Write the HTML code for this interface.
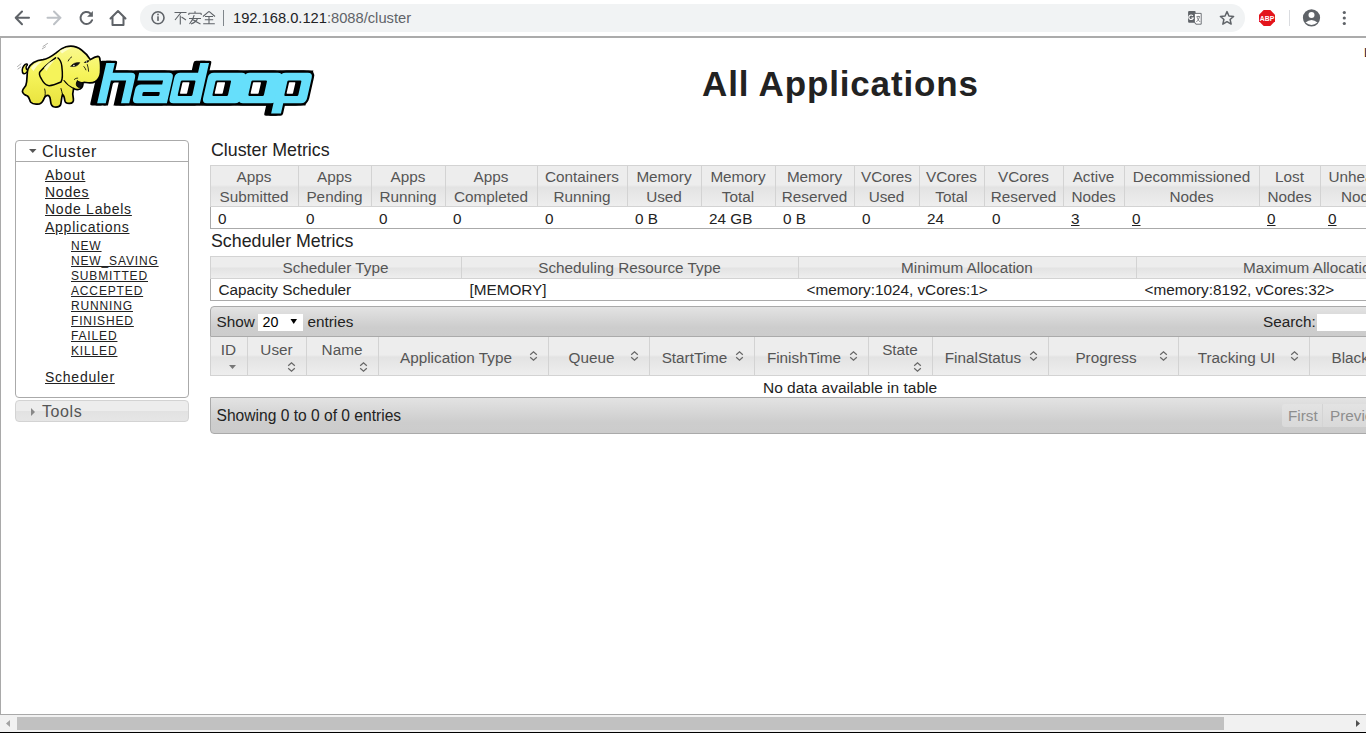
<!DOCTYPE html>
<html><head><meta charset="utf-8"><title>All Applications</title>
<style>
html,body{margin:0;padding:0;}
body{width:1366px;height:733px;overflow:hidden;position:relative;background:#fff;font-family:"Liberation Sans", sans-serif;}
.t{position:absolute;white-space:nowrap;}
.r{position:absolute;}
u{text-decoration:underline;}
</style></head><body>
<div class="r" style="left:0px;top:0px;width:1366px;height:36px;background:#fff;"></div>
<div class="r" style="left:0px;top:36px;width:1366px;height:2px;background:#ababab;"></div>
<div class="r" style="left:140px;top:4px;width:1105px;height:28px;background:#f1f3f4;border-radius:14px;"></div>
<svg class="r" style="left:0;top:0" width="1366" height="36" viewBox="0 0 1366 36">
<g fill="none" stroke="#5f6368" stroke-width="2" stroke-linecap="round" stroke-linejoin="round">
<path d="M29,17.8 H16 M22,11.5 L15.7,17.8 L22,24.2"/>
<path d="M110.5,18.5 L118,11 L125.5,18.5 M112.5,17 V25 H123.5 V17"/>
<path d="M92.1,20.2 A6,6 0 1 1 90.2,13.2"/>
</g>
<path d="M47.5,17.8 H60.5 M54,11.5 L60.3,17.8 L54,24.2" fill="none" stroke="#bdc1c6" stroke-width="2" stroke-linecap="round" stroke-linejoin="round"/>
<path d="M87.1,16.7 L92.9,11.1 L92.9,16.7 Z" fill="#5f6368"/>
<!-- info icon -->
<circle cx="158" cy="17.8" r="6" fill="none" stroke="#5f6368" stroke-width="1.6"/>
<rect x="157.2" y="16.3" width="1.6" height="4.6" fill="#5f6368"/>
<rect x="157.2" y="13.7" width="1.6" height="1.6" fill="#5f6368"/>
<!-- 不安全 drawn -->
<g fill="none" stroke="#5f6368" stroke-width="1.1">
<path d="M174.5,12.5 H186.5 M181,12.5 L175,20 M180.3,15.5 V24.5 M181.5,17 L186,20"/>
<path d="M195,11.3 V12.8 M188.8,13.3 H201.2 M188.8,13.3 V15 M201.2,13.3 V15 M189,18.5 H201 M194.2,15.2 Q193,20 189.5,24 M192,19 Q196,22 200.5,24 M197.5,18.5 Q196.5,22 191,24"/>
<path d="M209,11.3 L203,16.5 M209,11.3 L215,16.5 M205,16.5 H213 M204.8,19.7 H213.2 M209,16.5 V23.8 M203.2,23.8 H214.8"/>
</g>
<rect x="223" y="10" width="1" height="16" fill="#80868b"/>
<!-- translate icon -->
<rect x="1188.1" y="11" width="7.5" height="11.7" rx="1" fill="#5f6368"/>
<path d="M1194.4,13.4 H1201.2 V24.2 H1196 L1194.4,22.7 Z" fill="#fff" stroke="#5f6368" stroke-width="0.9"/>
<path d="M1195.4,22.4 L1196.5,24.5 L1194.5,22.6 Z" fill="#5f6368"/>
<path d="M1192.9,15.8 A2.3,2.3 0 1 0 1193.3,18 H1191.3" fill="none" stroke="#fff" stroke-width="1.1"/>
<path d="M1196.5,16.5 H1200 M1198.2,15.8 V16.5 M1197,17 Q1198,20.5 1200.2,22 M1199.5,17 Q1198.5,20.5 1196.3,22" fill="none" stroke="#5f6368" stroke-width="0.7"/>
<!-- star -->
<path d="M1227,11.6 L1228.95,15.95 L1233.6,16.4 L1230.1,19.5 L1231.15,24.1 L1227,21.7 L1222.85,24.1 L1223.9,19.5 L1220.4,16.4 L1225.05,15.95 Z" fill="none" stroke="#5f6368" stroke-width="1.5" stroke-linejoin="round"/>
<!-- ABP -->
<path d="M1263.7,10 H1270.3 L1275,14.7 V21.3 L1270.3,26 H1263.7 L1259,21.3 V14.7 Z" fill="#e3141b"/>
<text x="1267" y="20.8" font-size="6.8" font-family="Liberation Sans" fill="#fff" font-weight="bold" text-anchor="middle">ABP</text>
<rect x="1289" y="10" width="1" height="16" fill="#dadce0"/>
<!-- profile -->
<circle cx="1311.5" cy="17.8" r="8.6" fill="#5f6368"/>
<circle cx="1311.5" cy="15" r="3" fill="#fff"/>
<path d="M1305.5,22.6 Q1311.5,17.6 1317.5,22.6 Q1311.5,27.5 1305.5,22.6 Z" fill="#fff"/>
<circle cx="1344.3" cy="12.5" r="1.6" fill="#5f6368"/>
<circle cx="1344.3" cy="18" r="1.6" fill="#5f6368"/>
<circle cx="1344.3" cy="23.5" r="1.6" fill="#5f6368"/>
</svg>
<div class="t" style="left:233px;top:10.86px;font-size:14.7px;line-height:14.7px;color:#202124;">192.168.0.121<span style="color:#5f6368">:8088/cluster</span></div>
<div class="r" style="left:0px;top:38px;width:1px;height:676px;background:#a9a9a9;"></div>
<div class="r" style="left:0px;top:714px;width:1366px;height:1px;background:#a9a9a9;"></div>
<div class="r" style="left:0px;top:715px;width:1366px;height:17px;background:#f1f1f1;"></div>
<div class="r" style="left:17px;top:717px;width:1207px;height:13px;background:#c1c1c1;"></div>
<div class="r" style="left:0px;top:732px;width:1366px;height:1px;background:#000;"></div>
<svg class="r" style="left:0;top:715px" width="1366" height="17"><path d="M10,5 V12 L6,8.5 Z" fill="#a3a3a3"/><path d="M1356,5 V12 L1360,8.5 Z" fill="#505050"/></svg>
<svg class="r" style="left:0;top:38px" width="340" height="90" viewBox="0 38 340 90">
<g transform="matrix(1,0,-0.226,1,23.28,0)">
<path d="M97.2,63 H105.8 V72.7 H124.3 Q129.3,72.7 129.3,77.7 V103.3 H121.1 V80.5 H105.8 V103.3 H97.2 Z" fill="#000" stroke="#000" stroke-width="4.4" stroke-linejoin="round"/>
<path d="M97.2,63 H105.8 V72.7 H124.3 Q129.3,72.7 129.3,77.7 V103.3 H121.1 V80.5 H105.8 V103.3 H97.2 Z" transform="translate(-4.6,0)" fill="#000" stroke="#000" stroke-width="4.4" stroke-linejoin="round"/>
<path d="M132.3,72.7 H162 Q167,72.7 167,77.7 V103.3 H137 Q132,103.3 132,98.3 V89.6 Q132,84.6 137,84.6 H158 V80.5 H132.3 Z" fill="#000" stroke="#000" stroke-width="4.4" stroke-linejoin="round"/>
<path d="M132.3,72.7 H162 Q167,72.7 167,77.7 V103.3 H137 Q132,103.3 132,98.3 V89.6 Q132,84.6 137,84.6 H158 V80.5 H132.3 Z" transform="translate(-4.6,0)" fill="#000" stroke="#000" stroke-width="4.4" stroke-linejoin="round"/>
<path d="M173.5,72.7 H191.2 V63 H200 V103.3 H173.5 Q168.5,103.3 168.5,98.3 V77.7 Q168.5,72.7 173.5,72.7 Z" fill="#000" stroke="#000" stroke-width="4.4" stroke-linejoin="round"/>
<path d="M173.5,72.7 H191.2 V63 H200 V103.3 H173.5 Q168.5,103.3 168.5,98.3 V77.7 Q168.5,72.7 173.5,72.7 Z" transform="translate(-4.6,0)" fill="#000" stroke="#000" stroke-width="4.4" stroke-linejoin="round"/>
<path d="M207,72.7 H235 Q240,72.7 240,77.7 V98.3 Q240,103.3 235,103.3 H207 Q202,103.3 202,98.3 V77.7 Q202,72.7 207,72.7 Z" fill="#000" stroke="#000" stroke-width="4.4" stroke-linejoin="round"/>
<path d="M207,72.7 H235 Q240,72.7 240,77.7 V98.3 Q240,103.3 235,103.3 H207 Q202,103.3 202,98.3 V77.7 Q202,72.7 207,72.7 Z" transform="translate(-4.6,0)" fill="#000" stroke="#000" stroke-width="4.4" stroke-linejoin="round"/>
<path d="M243,72.7 H271 Q276,72.7 276,77.7 V98.3 Q276,103.3 271,103.3 H243 Q238,103.3 238,98.3 V77.7 Q238,72.7 243,72.7 Z" fill="#000" stroke="#000" stroke-width="4.4" stroke-linejoin="round"/>
<path d="M243,72.7 H271 Q276,72.7 276,77.7 V98.3 Q276,103.3 271,103.3 H243 Q238,103.3 238,98.3 V77.7 Q238,72.7 243,72.7 Z" transform="translate(-4.6,0)" fill="#000" stroke="#000" stroke-width="4.4" stroke-linejoin="round"/>
<path d="M279,72.7 H301 Q306,72.7 306,77.7 V98.3 Q306,103.3 301,103.3 H283.3 V113.5 H273.5 V77.7 Q273.5,72.7 279,72.7 Z" fill="#000" stroke="#000" stroke-width="4.4" stroke-linejoin="round"/>
<path d="M279,72.7 H301 Q306,72.7 306,77.7 V98.3 Q306,103.3 301,103.3 H283.3 V113.5 H273.5 V77.7 Q273.5,72.7 279,72.7 Z" transform="translate(-4.6,0)" fill="#000" stroke="#000" stroke-width="4.4" stroke-linejoin="round"/>
<path d="M104,70.5 H306 V105.5 H104 Z" fill="#000"/>
<path d="M97.2,63 H105.8 V72.7 H124.3 Q129.3,72.7 129.3,77.7 V103.3 H121.1 V80.5 H105.8 V103.3 H97.2 Z" fill="#66dffb"/>
<path d="M132.3,72.7 H162 Q167,72.7 167,77.7 V103.3 H137 Q132,103.3 132,98.3 V89.6 Q132,84.6 137,84.6 H158 V80.5 H132.3 Z" fill="#66dffb"/>
<path d="M173.5,72.7 H191.2 V63 H200 V103.3 H173.5 Q168.5,103.3 168.5,98.3 V77.7 Q168.5,72.7 173.5,72.7 Z" fill="#66dffb"/>
<path d="M207,72.7 H235 Q240,72.7 240,77.7 V98.3 Q240,103.3 235,103.3 H207 Q202,103.3 202,98.3 V77.7 Q202,72.7 207,72.7 Z" fill="#66dffb"/>
<path d="M243,72.7 H271 Q276,72.7 276,77.7 V98.3 Q276,103.3 271,103.3 H243 Q238,103.3 238,98.3 V77.7 Q238,72.7 243,72.7 Z" fill="#66dffb"/>
<path d="M279,72.7 H301 Q306,72.7 306,77.7 V98.3 Q306,103.3 301,103.3 H283.3 V113.5 H273.5 V77.7 Q273.5,72.7 279,72.7 Z" fill="#66dffb"/>
<rect x="140.4" y="92.1" width="17.1" height="3.8" rx="1" fill="#000"/>
<rect x="175.90" y="80.4" width="14.70" height="15.5" rx="1.2" fill="#000"/>
<rect x="177.8" y="82.3" width="7.10" height="11.4" rx="0.6" fill="#fff"/>
<rect x="210.60" y="80.4" width="15.60" height="15.5" rx="1.2" fill="#000"/>
<rect x="212.5" y="82.3" width="8.00" height="11.4" rx="0.6" fill="#fff"/>
<rect x="246.50" y="80.4" width="15.60" height="15.5" rx="1.2" fill="#000"/>
<rect x="248.4" y="82.3" width="8.00" height="11.4" rx="0.6" fill="#fff"/>
<rect x="282.50" y="80.4" width="14.00" height="15.5" rx="1.2" fill="#000"/>
<rect x="284.4" y="82.3" width="6.40" height="11.4" rx="0.6" fill="#fff"/>
<path d="M108.5,84 Q108.5,82.5 110,82.5 H114.1 V106.5 H108.5 Z" fill="#fff"/>
</g>
<defs><linearGradient id="ey" x1="0" y1="0" x2="0" y2="1"><stop offset="0" stop-color="#f9f890"/><stop offset="0.45" stop-color="#f6f45c"/><stop offset="1" stop-color="#e8e23c"/></linearGradient></defs>
<g stroke="#000" stroke-linejoin="round" stroke-linecap="round">
<path d="M28.5,70 C27,73 24,75 22.5,72.5 C21.5,70 23,66 25.2,64.3 C26.5,63.5 27.8,64 27.2,65.3 C25.8,66.5 25.5,69 27.5,70 Z" fill="#f5f35a" stroke-width="1.5"/>
<path d="M28,69 C30,64 36,60 43,59.6 C48,59 52,56 55.8,53.1 C58.5,50.5 62,48 66,46.8 C71,45.5 77,46.5 81.5,50 C85,52.5 88,56 90.3,59.6 C92,58.5 95,56.7 97.7,56.4 C99,56.5 99.8,57.2 99.7,58.5 C100.6,62 100.8,68 100.5,72.6 C100.2,76.5 98.5,79.5 95.5,81.5 C93,83 89.5,83.2 86,82.5 C84.5,82.4 83.5,82.3 82.8,82.8 C83,84.5 82.5,87.5 80,89 C77.5,90 75,89.5 73.6,88.4 C72.8,91 72.5,95 73.4,99 C73.8,101.5 72.5,103.3 69.5,103.4 C66.5,103.5 65,102.8 64.8,100.5 C64.5,98 64,95.5 62.5,94.5 C61.5,97 61.5,101 60.8,104 C60.2,106.5 57.5,107.3 54.5,107 C51.5,106.6 50.8,104 50.6,101.5 C50.4,99 50,96.5 48.5,95.5 C46.5,95 45.5,96 44.5,97.5 C43.5,100 42.5,103.2 39.5,103.8 C36,104.4 32.5,104.2 30.8,102.3 C29.5,100.5 29.5,97.5 27.5,96 C25,95 22.5,94 22.4,91.2 C22.5,89 24.5,87.5 25.8,85.6 C27,82 27,78 27.1,75.4 C27.3,72.5 27.5,70.5 28,69 Z" fill="url(#ey)" stroke-width="1.7"/>
<path d="M55.5,57.8 C50,62 44,67 40,71.7 C38.8,73.5 39.5,76 41.5,79 C43,82 45.5,85 48.4,85.6 C52,86 57,83.8 61,82 C62.5,80 62.5,72 61.8,66 C61.3,62 60,59.5 58,58" fill="#f5f35a" stroke-width="1.5"/>
<path d="M77.3,81 C79,81.8 81,82.5 82.8,82.8 C83,84.5 82.5,86.5 81,87.3 C79.5,88 77.5,87.5 76.5,85.5 C76,84 76.5,82 77.3,81 Z" fill="#111" stroke-width="0.9"/>
<path d="M64,80.5 C66.5,84 70,86.8 73.6,88.4" fill="none" stroke-width="1.1"/>
<path d="M70.9,66.2 C72.5,63.5 76,62.2 79.8,62.6 C78.5,65.5 75,67.5 70.9,66.2 Z" fill="#111" stroke-width="0.5"/>
<path d="M68.2,61 C69,59.2 70.2,57.8 71.6,57 M83.9,66.5 C84.8,67.5 85.5,68.7 85.9,69.9 M87.3,64.5 C88,66.8 88.5,69 88.6,71.3 M74.3,79.5 C75.3,78.5 76.5,78 77.7,78.1" fill="none" stroke-width="0.8"/>
<path d="M84.6,62.4 C86,61 88,60.4 89.3,60.6 C88.6,62.2 86.5,63.2 84.6,62.4 Z" fill="#111" stroke-width="0.5"/>

<path d="M44.7,89 C45.5,92 45.5,95 44.5,97.5 M61,88.5 C61.7,90.8 62,92.8 62.5,94.5" fill="none" stroke-width="0.9"/>
<path d="M43,46.5 L47.5,43.5 M42.3,48.8 L45.5,46.8" fill="none" stroke="#888" stroke-width="0.7"/>
<path d="M17.5,66.5 L21,63.8 M18,69 L20.8,67" fill="none" stroke="#888" stroke-width="0.7"/>
</g>
<path d="M31,68 C33.5,64 38,61.5 42,61.5 C38.5,64 35.5,67 33.5,71 Z" fill="#fdfdc8"/>
<path d="M60,51 C63,48.5 68,47.3 72,47.8 C68,49.5 64.5,51.5 62,53.5 Z" fill="#fdfdc8"/>
<path d="M44,68 C47,64 51,61 55,59.5 C52,63 49,66.5 46.5,71 Z" fill="#fbfbb0"/>
<circle cx="73.9" cy="65.5" r="0.8" fill="#fff"/><circle cx="86.6" cy="61.9" r="0.55" fill="#fff"/>

</svg>
<div class="t" style="left:702px;top:66.37px;font-size:35px;line-height:35px;color:#222;font-weight:bold;letter-spacing:0.85px;">All Applications</div>
<div class="t" style="left:1364px;top:46.84px;font-size:12px;line-height:12px;color:#222;">Logged in as: dr.who</div>
<div class="r" style="left:15px;top:140px;width:172px;height:256px;border:1px solid #aaa;border-radius:4px;background:#fff;"></div>
<div class="r" style="left:16px;top:161px;width:172px;height:1px;background:#aaa;"></div>
<svg class="r" style="left:28px;top:148px" width="10" height="6"><path d="M1,1 H8.5 L4.75,5 Z" fill="#555"/></svg>
<div class="t" style="left:42px;top:143.96px;font-size:16px;line-height:16px;color:#222;letter-spacing:0.6px;">Cluster</div>
<div class="t" style="left:45px;top:168.15px;font-size:14px;line-height:14px;color:#222;letter-spacing:0.75px;text-decoration:underline;">About</div>
<div class="t" style="left:45px;top:185.15px;font-size:14px;line-height:14px;color:#222;letter-spacing:0.75px;text-decoration:underline;">Nodes</div>
<div class="t" style="left:45px;top:201.65px;font-size:14px;line-height:14px;color:#222;letter-spacing:0.75px;text-decoration:underline;">Node Labels</div>
<div class="t" style="left:45px;top:219.55px;font-size:14px;line-height:14px;color:#222;letter-spacing:0.75px;text-decoration:underline;">Applications</div>
<div class="t" style="left:71px;top:239.64px;font-size:12px;line-height:12px;color:#222;letter-spacing:0.85px;text-decoration:underline;">NEW</div>
<div class="t" style="left:71px;top:254.64px;font-size:12px;line-height:12px;color:#222;letter-spacing:0.85px;text-decoration:underline;">NEW_SAVING</div>
<div class="t" style="left:71px;top:269.64px;font-size:12px;line-height:12px;color:#222;letter-spacing:0.85px;text-decoration:underline;">SUBMITTED</div>
<div class="t" style="left:71px;top:284.64px;font-size:12px;line-height:12px;color:#222;letter-spacing:0.85px;text-decoration:underline;">ACCEPTED</div>
<div class="t" style="left:71px;top:299.64px;font-size:12px;line-height:12px;color:#222;letter-spacing:0.85px;text-decoration:underline;">RUNNING</div>
<div class="t" style="left:71px;top:314.64px;font-size:12px;line-height:12px;color:#222;letter-spacing:0.85px;text-decoration:underline;">FINISHED</div>
<div class="t" style="left:71px;top:329.64px;font-size:12px;line-height:12px;color:#222;letter-spacing:0.85px;text-decoration:underline;">FAILED</div>
<div class="t" style="left:71px;top:344.64px;font-size:12px;line-height:12px;color:#222;letter-spacing:0.85px;text-decoration:underline;">KILLED</div>
<div class="t" style="left:45px;top:369.65px;font-size:14px;line-height:14px;color:#222;letter-spacing:0.75px;text-decoration:underline;">Scheduler</div>
<div class="r" style="left:15px;top:400px;width:172px;height:20px;border:1px solid #d3d3d3;border-radius:4px;background:linear-gradient(#ededed 0%,#ededed 50%,#e2e2e2 51%,#e6e6e6 100%);"></div>
<svg class="r" style="left:30px;top:407px" width="6" height="10"><path d="M1,1 V9 L5,5 Z" fill="#888"/></svg>
<div class="t" style="left:42px;top:404.06px;font-size:16px;line-height:16px;color:#555;letter-spacing:0.6px;">Tools</div>
<div class="t" style="left:211px;top:142.23px;font-size:17.8px;line-height:17.8px;color:#222;">Cluster Metrics</div>
<div class="r" style="left:210px;top:165px;width:1200px;height:42px;border-top:1px solid #d3d3d3;border-bottom:1px solid #d3d3d3;border-left:1px solid #d3d3d3;box-sizing:border-box;background:linear-gradient(#ededed 0%,#ededed 47%,#e3e3e3 53%,#eeeeee 100%);"></div>
<div class="r" style="left:210px;top:207px;width:1200px;height:22px;border-left:1px solid #aaa;border-bottom:1px solid #aaa;box-sizing:border-box;background:#fff;"></div>
<div class="t" style="left:210px;top:169.35px;font-size:15.3px;line-height:15.3px;color:#555;width:88px;text-align:center;">Apps</div>
<div class="t" style="left:210px;top:188.55px;font-size:15.3px;line-height:15.3px;color:#555;width:88px;text-align:center;">Submitted</div>
<div class="t" style="left:218px;top:211.05px;font-size:15.3px;line-height:15.3px;color:#222;">0</div>
<div class="r" style="left:298px;top:166px;width:1px;height:41px;background:#d3d3d3;"></div>
<div class="t" style="left:298px;top:169.35px;font-size:15.3px;line-height:15.3px;color:#555;width:73px;text-align:center;">Apps</div>
<div class="t" style="left:298px;top:188.55px;font-size:15.3px;line-height:15.3px;color:#555;width:73px;text-align:center;">Pending</div>
<div class="t" style="left:306px;top:211.05px;font-size:15.3px;line-height:15.3px;color:#222;">0</div>
<div class="r" style="left:371px;top:166px;width:1px;height:41px;background:#d3d3d3;"></div>
<div class="t" style="left:371px;top:169.35px;font-size:15.3px;line-height:15.3px;color:#555;width:74px;text-align:center;">Apps</div>
<div class="t" style="left:371px;top:188.55px;font-size:15.3px;line-height:15.3px;color:#555;width:74px;text-align:center;">Running</div>
<div class="t" style="left:379px;top:211.05px;font-size:15.3px;line-height:15.3px;color:#222;">0</div>
<div class="r" style="left:445px;top:166px;width:1px;height:41px;background:#d3d3d3;"></div>
<div class="t" style="left:445px;top:169.35px;font-size:15.3px;line-height:15.3px;color:#555;width:92px;text-align:center;">Apps</div>
<div class="t" style="left:445px;top:188.55px;font-size:15.3px;line-height:15.3px;color:#555;width:92px;text-align:center;">Completed</div>
<div class="t" style="left:453px;top:211.05px;font-size:15.3px;line-height:15.3px;color:#222;">0</div>
<div class="r" style="left:537px;top:166px;width:1px;height:41px;background:#d3d3d3;"></div>
<div class="t" style="left:537px;top:169.35px;font-size:15.3px;line-height:15.3px;color:#555;width:90px;text-align:center;">Containers</div>
<div class="t" style="left:537px;top:188.55px;font-size:15.3px;line-height:15.3px;color:#555;width:90px;text-align:center;">Running</div>
<div class="t" style="left:545px;top:211.05px;font-size:15.3px;line-height:15.3px;color:#222;">0</div>
<div class="r" style="left:627px;top:166px;width:1px;height:41px;background:#d3d3d3;"></div>
<div class="t" style="left:627px;top:169.35px;font-size:15.3px;line-height:15.3px;color:#555;width:74px;text-align:center;">Memory</div>
<div class="t" style="left:627px;top:188.55px;font-size:15.3px;line-height:15.3px;color:#555;width:74px;text-align:center;">Used</div>
<div class="t" style="left:635px;top:211.05px;font-size:15.3px;line-height:15.3px;color:#222;">0 B</div>
<div class="r" style="left:701px;top:166px;width:1px;height:41px;background:#d3d3d3;"></div>
<div class="t" style="left:701px;top:169.35px;font-size:15.3px;line-height:15.3px;color:#555;width:74px;text-align:center;">Memory</div>
<div class="t" style="left:701px;top:188.55px;font-size:15.3px;line-height:15.3px;color:#555;width:74px;text-align:center;">Total</div>
<div class="t" style="left:709px;top:211.05px;font-size:15.3px;line-height:15.3px;color:#222;">24 GB</div>
<div class="r" style="left:775px;top:166px;width:1px;height:41px;background:#d3d3d3;"></div>
<div class="t" style="left:775px;top:169.35px;font-size:15.3px;line-height:15.3px;color:#555;width:79px;text-align:center;">Memory</div>
<div class="t" style="left:775px;top:188.55px;font-size:15.3px;line-height:15.3px;color:#555;width:79px;text-align:center;">Reserved</div>
<div class="t" style="left:783px;top:211.05px;font-size:15.3px;line-height:15.3px;color:#222;">0 B</div>
<div class="r" style="left:854px;top:166px;width:1px;height:41px;background:#d3d3d3;"></div>
<div class="t" style="left:854px;top:169.35px;font-size:15.3px;line-height:15.3px;color:#555;width:65px;text-align:center;">VCores</div>
<div class="t" style="left:854px;top:188.55px;font-size:15.3px;line-height:15.3px;color:#555;width:65px;text-align:center;">Used</div>
<div class="t" style="left:862px;top:211.05px;font-size:15.3px;line-height:15.3px;color:#222;">0</div>
<div class="r" style="left:919px;top:166px;width:1px;height:41px;background:#d3d3d3;"></div>
<div class="t" style="left:919px;top:169.35px;font-size:15.3px;line-height:15.3px;color:#555;width:65px;text-align:center;">VCores</div>
<div class="t" style="left:919px;top:188.55px;font-size:15.3px;line-height:15.3px;color:#555;width:65px;text-align:center;">Total</div>
<div class="t" style="left:927px;top:211.05px;font-size:15.3px;line-height:15.3px;color:#222;">24</div>
<div class="r" style="left:984px;top:166px;width:1px;height:41px;background:#d3d3d3;"></div>
<div class="t" style="left:984px;top:169.35px;font-size:15.3px;line-height:15.3px;color:#555;width:79px;text-align:center;">VCores</div>
<div class="t" style="left:984px;top:188.55px;font-size:15.3px;line-height:15.3px;color:#555;width:79px;text-align:center;">Reserved</div>
<div class="t" style="left:992px;top:211.05px;font-size:15.3px;line-height:15.3px;color:#222;">0</div>
<div class="r" style="left:1063px;top:166px;width:1px;height:41px;background:#d3d3d3;"></div>
<div class="t" style="left:1063px;top:169.35px;font-size:15.3px;line-height:15.3px;color:#555;width:61px;text-align:center;">Active</div>
<div class="t" style="left:1063px;top:188.55px;font-size:15.3px;line-height:15.3px;color:#555;width:61px;text-align:center;">Nodes</div>
<div class="t" style="left:1071px;top:211.05px;font-size:15.3px;line-height:15.3px;color:#222;"><u>3</u></div>
<div class="r" style="left:1124px;top:166px;width:1px;height:41px;background:#d3d3d3;"></div>
<div class="t" style="left:1124px;top:169.35px;font-size:15.3px;line-height:15.3px;color:#555;width:135px;text-align:center;">Decommissioned</div>
<div class="t" style="left:1124px;top:188.55px;font-size:15.3px;line-height:15.3px;color:#555;width:135px;text-align:center;">Nodes</div>
<div class="t" style="left:1132px;top:211.05px;font-size:15.3px;line-height:15.3px;color:#222;"><u>0</u></div>
<div class="r" style="left:1259px;top:166px;width:1px;height:41px;background:#d3d3d3;"></div>
<div class="t" style="left:1259px;top:169.35px;font-size:15.3px;line-height:15.3px;color:#555;width:61px;text-align:center;">Lost</div>
<div class="t" style="left:1259px;top:188.55px;font-size:15.3px;line-height:15.3px;color:#555;width:61px;text-align:center;">Nodes</div>
<div class="t" style="left:1267px;top:211.05px;font-size:15.3px;line-height:15.3px;color:#222;"><u>0</u></div>
<div class="r" style="left:1320px;top:166px;width:1px;height:41px;background:#d3d3d3;"></div>
<div class="t" style="left:1320px;top:169.35px;font-size:15.3px;line-height:15.3px;color:#555;width:86px;text-align:center;">Unhealthy</div>
<div class="t" style="left:1320px;top:188.55px;font-size:15.3px;line-height:15.3px;color:#555;width:86px;text-align:center;">Nodes</div>
<div class="t" style="left:1328px;top:211.05px;font-size:15.3px;line-height:15.3px;color:#222;"><u>0</u></div>
<div class="t" style="left:211px;top:233.23px;font-size:17.8px;line-height:17.8px;color:#222;">Scheduler Metrics</div>
<div class="r" style="left:210px;top:256px;width:1200px;height:23px;border-top:1px solid #d3d3d3;border-bottom:1px solid #d3d3d3;border-left:1px solid #d3d3d3;box-sizing:border-box;background:linear-gradient(#ededed 0%,#ededed 47%,#e3e3e3 53%,#eeeeee 100%);"></div>
<div class="r" style="left:210px;top:279px;width:1200px;height:22px;border-left:1px solid #aaa;border-bottom:1px solid #aaa;box-sizing:border-box;background:#fff;"></div>
<div class="t" style="left:210px;top:260.35px;font-size:15.3px;line-height:15.3px;color:#555;width:251px;text-align:center;">Scheduler Type</div>
<div class="t" style="left:218.5px;top:282.35px;font-size:15.3px;line-height:15.3px;color:#222;">Capacity Scheduler</div>
<div class="r" style="left:461px;top:257px;width:1px;height:21px;background:#d3d3d3;"></div>
<div class="t" style="left:461px;top:260.35px;font-size:15.3px;line-height:15.3px;color:#555;width:337px;text-align:center;">Scheduling Resource Type</div>
<div class="t" style="left:469.5px;top:282.35px;font-size:15.3px;line-height:15.3px;color:#222;">[MEMORY]</div>
<div class="r" style="left:798px;top:257px;width:1px;height:21px;background:#d3d3d3;"></div>
<div class="t" style="left:798px;top:260.35px;font-size:15.3px;line-height:15.3px;color:#555;width:338px;text-align:center;">Minimum Allocation</div>
<div class="t" style="left:806.5px;top:282.35px;font-size:15.3px;line-height:15.3px;color:#222;">&lt;memory:1024, vCores:1&gt;</div>
<div class="r" style="left:1136px;top:257px;width:1px;height:21px;background:#d3d3d3;"></div>
<div class="t" style="left:1136px;top:260.35px;font-size:15.3px;line-height:15.3px;color:#555;width:350px;text-align:center;">Maximum Allocation</div>
<div class="t" style="left:1144.5px;top:282.35px;font-size:15.3px;line-height:15.3px;color:#222;">&lt;memory:8192, vCores:32&gt;</div>
<div class="r" style="left:210px;top:306px;width:1200px;height:31px;border:1px solid #aaa;border-radius:4px 0 0 0;box-sizing:border-box;background:linear-gradient(#e3e3e3 0%,#cdcdcd 70%,#cccccc 100%);"></div>
<div class="t" style="left:216.5px;top:313.55px;font-size:15.3px;line-height:15.3px;color:#222;">Show</div>
<div class="r" style="left:258px;top:314px;width:45px;height:17px;background:#fff;"></div>
<div class="t" style="left:262.5px;top:314.60px;font-size:14.3px;line-height:14.3px;color:#000;">20</div>
<svg class="r" style="left:290px;top:318px" width="8" height="7"><path d="M0.5,1 H7 L3.75,6 Z" fill="#000"/></svg>
<div class="t" style="left:307.5px;top:313.55px;font-size:15.3px;line-height:15.3px;color:#222;">entries</div>
<div class="t" style="left:1263px;top:313.75px;font-size:15.3px;line-height:15.3px;color:#222;">Search:</div>
<div class="r" style="left:1317px;top:314px;width:60px;height:17px;background:#fff;"></div>
<div class="r" style="left:210px;top:337px;width:1200px;height:39px;border-left:1px solid #d3d3d3;border-bottom:1px solid #d3d3d3;box-sizing:border-box;background:linear-gradient(#ededed 0%,#ededed 47%,#e3e3e3 53%,#eeeeee 100%);"></div>
<div class="t" style="left:210px;top:342.05px;font-size:15.3px;line-height:15.3px;color:#555;width:37px;text-align:center;">ID</div>
<div class="r" style="left:247px;top:337px;width:1px;height:38px;background:#d3d3d3;"></div>
<div class="t" style="left:247px;top:342.05px;font-size:15.3px;line-height:15.3px;color:#555;width:59px;text-align:center;">User</div>
<div class="r" style="left:306px;top:337px;width:1px;height:38px;background:#d3d3d3;"></div>
<div class="t" style="left:306px;top:342.05px;font-size:15.3px;line-height:15.3px;color:#555;width:72px;text-align:center;">Name</div>
<div class="r" style="left:378px;top:337px;width:1px;height:38px;background:#d3d3d3;"></div>
<div class="t" style="left:378px;top:349.85px;font-size:15.3px;line-height:15.3px;color:#555;width:156px;text-align:center;">Application Type</div>
<div class="r" style="left:548px;top:337px;width:1px;height:38px;background:#d3d3d3;"></div>
<div class="t" style="left:548px;top:349.85px;font-size:15.3px;line-height:15.3px;color:#555;width:87px;text-align:center;">Queue</div>
<div class="r" style="left:649px;top:337px;width:1px;height:38px;background:#d3d3d3;"></div>
<div class="t" style="left:649px;top:349.85px;font-size:15.3px;line-height:15.3px;color:#555;width:91px;text-align:center;">StartTime</div>
<div class="r" style="left:754px;top:337px;width:1px;height:38px;background:#d3d3d3;"></div>
<div class="t" style="left:754px;top:349.85px;font-size:15.3px;line-height:15.3px;color:#555;width:100px;text-align:center;">FinishTime</div>
<div class="r" style="left:868px;top:337px;width:1px;height:38px;background:#d3d3d3;"></div>
<div class="t" style="left:868px;top:342.05px;font-size:15.3px;line-height:15.3px;color:#555;width:64px;text-align:center;">State</div>
<div class="r" style="left:932px;top:337px;width:1px;height:38px;background:#d3d3d3;"></div>
<div class="t" style="left:932px;top:349.85px;font-size:15.3px;line-height:15.3px;color:#555;width:102px;text-align:center;">FinalStatus</div>
<div class="r" style="left:1048px;top:337px;width:1px;height:38px;background:#d3d3d3;"></div>
<div class="t" style="left:1048px;top:349.85px;font-size:15.3px;line-height:15.3px;color:#555;width:116px;text-align:center;">Progress</div>
<div class="r" style="left:1178px;top:337px;width:1px;height:38px;background:#d3d3d3;"></div>
<div class="t" style="left:1178px;top:349.85px;font-size:15.3px;line-height:15.3px;color:#555;width:117px;text-align:center;">Tracking UI</div>
<div class="r" style="left:1309px;top:337px;width:1px;height:38px;background:#d3d3d3;"></div>
<div class="t" style="left:1331.5px;top:349.85px;font-size:15.3px;line-height:15.3px;color:#555;">Blacklisted Nodes</div>
<svg class="r" style="left:287px;top:362px" width="9" height="11"><path d="M1.2,3.8 L4.5,0.8 L7.8,3.8 M1.2,6.2 L4.5,9.2 L7.8,6.2" fill="none" stroke="#666" stroke-width="1.2"/></svg>
<svg class="r" style="left:359px;top:362px" width="9" height="11"><path d="M1.2,3.8 L4.5,0.8 L7.8,3.8 M1.2,6.2 L4.5,9.2 L7.8,6.2" fill="none" stroke="#666" stroke-width="1.2"/></svg>
<svg class="r" style="left:529px;top:351px" width="9" height="11"><path d="M1.2,3.8 L4.5,0.8 L7.8,3.8 M1.2,6.2 L4.5,9.2 L7.8,6.2" fill="none" stroke="#666" stroke-width="1.2"/></svg>
<svg class="r" style="left:630px;top:351px" width="9" height="11"><path d="M1.2,3.8 L4.5,0.8 L7.8,3.8 M1.2,6.2 L4.5,9.2 L7.8,6.2" fill="none" stroke="#666" stroke-width="1.2"/></svg>
<svg class="r" style="left:735px;top:351px" width="9" height="11"><path d="M1.2,3.8 L4.5,0.8 L7.8,3.8 M1.2,6.2 L4.5,9.2 L7.8,6.2" fill="none" stroke="#666" stroke-width="1.2"/></svg>
<svg class="r" style="left:849px;top:351px" width="9" height="11"><path d="M1.2,3.8 L4.5,0.8 L7.8,3.8 M1.2,6.2 L4.5,9.2 L7.8,6.2" fill="none" stroke="#666" stroke-width="1.2"/></svg>
<svg class="r" style="left:913px;top:361.5px" width="9" height="11"><path d="M1.2,3.8 L4.5,0.8 L7.8,3.8 M1.2,6.2 L4.5,9.2 L7.8,6.2" fill="none" stroke="#666" stroke-width="1.2"/></svg>
<svg class="r" style="left:1029px;top:351px" width="9" height="11"><path d="M1.2,3.8 L4.5,0.8 L7.8,3.8 M1.2,6.2 L4.5,9.2 L7.8,6.2" fill="none" stroke="#666" stroke-width="1.2"/></svg>
<svg class="r" style="left:1159px;top:351px" width="9" height="11"><path d="M1.2,3.8 L4.5,0.8 L7.8,3.8 M1.2,6.2 L4.5,9.2 L7.8,6.2" fill="none" stroke="#666" stroke-width="1.2"/></svg>
<svg class="r" style="left:1290px;top:351px" width="9" height="11"><path d="M1.2,3.8 L4.5,0.8 L7.8,3.8 M1.2,6.2 L4.5,9.2 L7.8,6.2" fill="none" stroke="#666" stroke-width="1.2"/></svg>
<svg class="r" style="left:228px;top:364px" width="9" height="6"><path d="M1,1 H8 L4.5,5 Z" fill="#777"/></svg>
<div class="r" style="left:210px;top:376px;width:1200px;height:21px;background:#fff;"></div>
<div class="t" style="left:763px;top:379.68px;font-size:15.5px;line-height:15.5px;color:#222;">No data available in table</div>
<div class="r" style="left:210px;top:397px;width:1200px;height:37px;border:1px solid #aaa;border-radius:0 0 0 4px;box-sizing:border-box;background:linear-gradient(#e3e3e3 0%,#cdcdcd 70%,#cccccc 100%);"></div>
<div class="t" style="left:216.5px;top:407.79px;font-size:15.6px;line-height:15.6px;color:#222;">Showing 0 to 0 of 0 entries</div>
<div class="r" style="left:1282px;top:404px;width:40px;height:23px;background:linear-gradient(#e3e3e3,#d9d9d9);border-radius:3px 0 0 3px;"></div>
<div class="r" style="left:1322px;top:404px;width:60px;height:23px;background:linear-gradient(#e3e3e3,#d9d9d9);border-left:1px solid #d4d4d4;"></div>
<div class="t" style="left:1288px;top:408.05px;font-size:15.3px;line-height:15.3px;color:#8e8e8e;">First</div>
<div class="t" style="left:1330px;top:408.05px;font-size:15.3px;line-height:15.3px;color:#8e8e8e;">Previous</div>
</body></html>
